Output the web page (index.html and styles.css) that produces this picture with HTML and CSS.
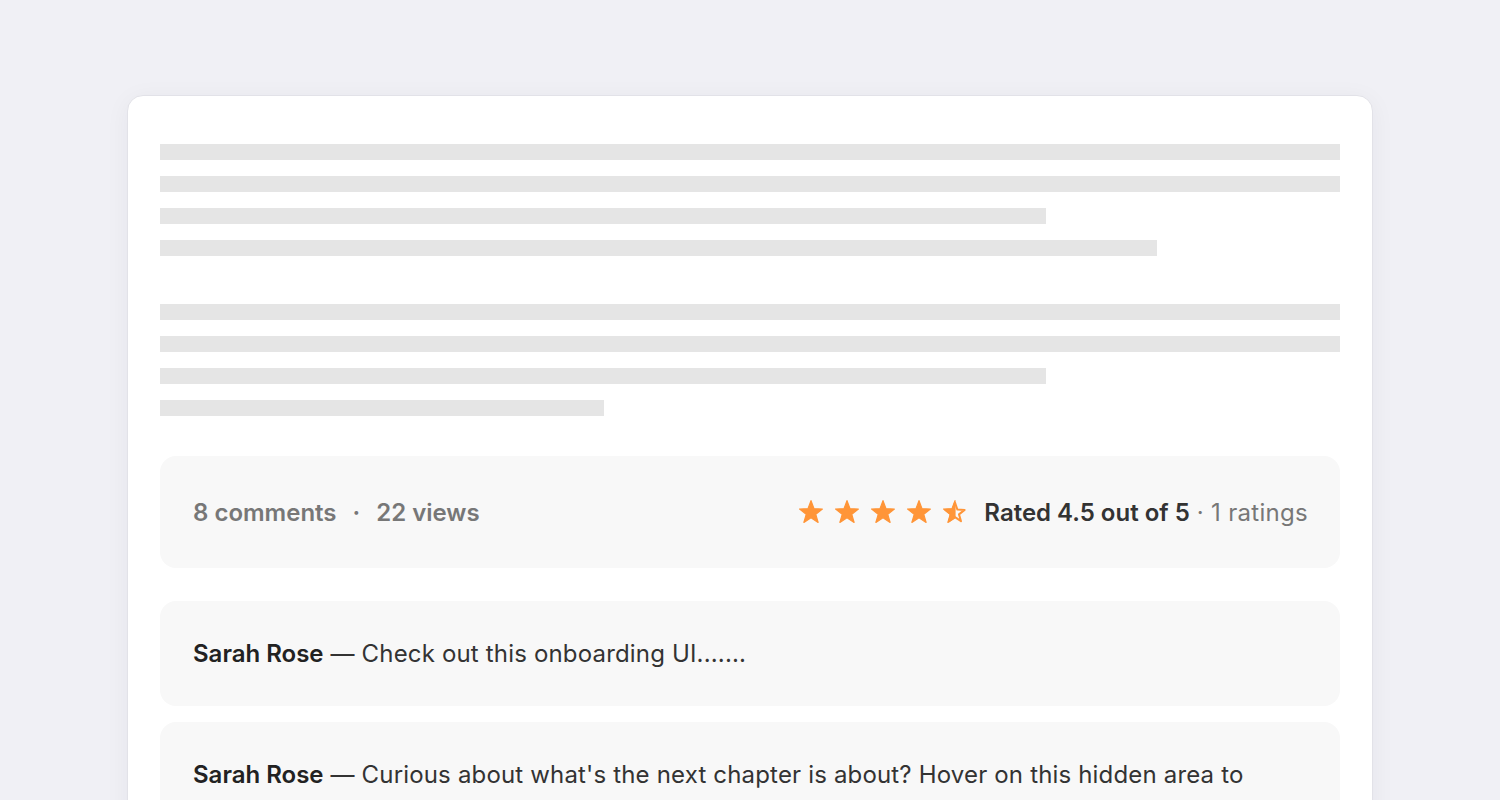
FILE: index.html
```html
<!DOCTYPE html>
<html lang="en">
<head>
<meta charset="utf-8">
<title>Post</title>
<link rel="stylesheet" href="styles.css">
</head>
<body>
<main class="page">
  <article class="card">
    <div class="skeleton">
      <div class="para">
        <div class="line w100"></div>
        <div class="line w100"></div>
        <div class="line w75"></div>
        <div class="line w84"></div>
      </div>
      <div class="para">
        <div class="line w100"></div>
        <div class="line w100"></div>
        <div class="line w75"></div>
        <div class="line w37"></div>
      </div>
    </div>
    <section class="stats">
      <div class="counts">
        <span>8 comments</span>
        <span class="dot">·</span>
        <span>22 views</span>
      </div>
      <div class="rating">
        <div class="stars">
          <svg class="star" viewBox="0 0 24 24"><path class="full" d="M12 0.6L15.0 8.7 23.4 9.0 16.8 14.3 19.1 22.4 12 17.7 4.9 22.4 7.2 14.3 0.6 9.0 9.0 8.7Z"/></svg>
          <svg class="star" viewBox="0 0 24 24"><path class="full" d="M12 0.6L15.0 8.7 23.4 9.0 16.8 14.3 19.1 22.4 12 17.7 4.9 22.4 7.2 14.3 0.6 9.0 9.0 8.7Z"/></svg>
          <svg class="star" viewBox="0 0 24 24"><path class="full" d="M12 0.6L15.0 8.7 23.4 9.0 16.8 14.3 19.1 22.4 12 17.7 4.9 22.4 7.2 14.3 0.6 9.0 9.0 8.7Z"/></svg>
          <svg class="star" viewBox="0 0 24 24"><path class="full" d="M12 0.6L15.0 8.7 23.4 9.0 16.8 14.3 19.1 22.4 12 17.7 4.9 22.4 7.2 14.3 0.6 9.0 9.0 8.7Z"/></svg>
          <svg class="star" viewBox="0 0 24 24"><path class="outline" d="M12 2.6L14.4 9.6 21.6 9.9 16 14.4 18 21.2 12 17.2 6 21.2 8 14.4 2.4 9.9 9.6 9.6Z"/><path class="full" d="M12 0.6L12 17.7 4.9 22.4 7.2 14.3 0.6 9.0 9.0 8.7Z"/></svg>
        </div>
        <span class="rated">Rated 4.5 out of 5</span>
        <span class="count">· 1 ratings</span>
      </div>
    </section>
    <section class="comments">
      <div class="comment"><strong>Sarah Rose</strong> — Check out this onboarding UI.......</div>
      <div class="comment"><strong>Sarah Rose</strong> — Curious about what's the next chapter is about? Hover on this hidden area to see the next chapter preview</div>
    </section>
  </article>
</main>
</body>
</html>
```
FILE: styles.css
```css
* { box-sizing: border-box; }
html, body { margin: 0; }
body {
  background: #f0f0f5;
  font-family: Inter, "Noto Sans", sans-serif;
  color: #333;
}
.page {
  padding-top: 95px;
  display: flex;
  justify-content: center;
}
.card {
  width: 1246px;
  background: #fff;
  border: 1px solid #e2e2e8;
  border-radius: 16px;
  box-shadow: 0 4px 24px rgba(30, 30, 60, 0.05);
  padding: 48px 32px 32px;
}
.skeleton {
  display: flex;
  flex-direction: column;
  gap: 48px;
}
.para {
  display: flex;
  flex-direction: column;
  gap: 16px;
}
.line {
  height: 16px;
  background: #e5e5e5;
}
.w100 { width: 100%; }
.w75 { width: 75.1%; }
.w84 { width: 84.5%; }
.w37 { width: 37.6%; }
.stats {
  margin-top: 40px;
  height: 112px;
  background: #f8f8f8;
  border-radius: 16px;
  padding: 0 32px 0 33px;
  display: flex;
  align-items: center;
  justify-content: space-between;
  font-size: 24px;
}
.counts {
  display: flex;
  gap: 16px;
  color: #777;
  font-weight: 600;
}
.rating {
  display: flex;
  align-items: center;
}
.stars {
  display: flex;
  gap: 12px;
  margin-right: 17px;
}
.star {
  width: 24px;
  height: 24px;
  display: block;
  overflow: visible;
}
.star .full {
  fill: #ff9538;
  stroke: #ff9538;
  stroke-width: 1.2;
  stroke-linejoin: round;
}
.star .outline {
  fill: none;
  stroke: #ff9538;
  stroke-width: 2;
  stroke-linejoin: round;
}
.rated {
  font-weight: 600;
  color: #333;
  margin-right: 7px;
}
.count {
  color: #777;
  letter-spacing: 0.3px;
}
.comments {
  margin-top: 33px;
  display: flex;
  flex-direction: column;
  gap: 16px;
}
.comment {
  background: #f8f8f8;
  border-radius: 16px;
  padding: 35px 64px 34px 33px;
  font-size: 24px;
  line-height: 36px;
  color: #333;
  letter-spacing: 0.17px;
}
.comment strong {
  font-weight: 600;
  color: #222;
  letter-spacing: 0;
}
```
